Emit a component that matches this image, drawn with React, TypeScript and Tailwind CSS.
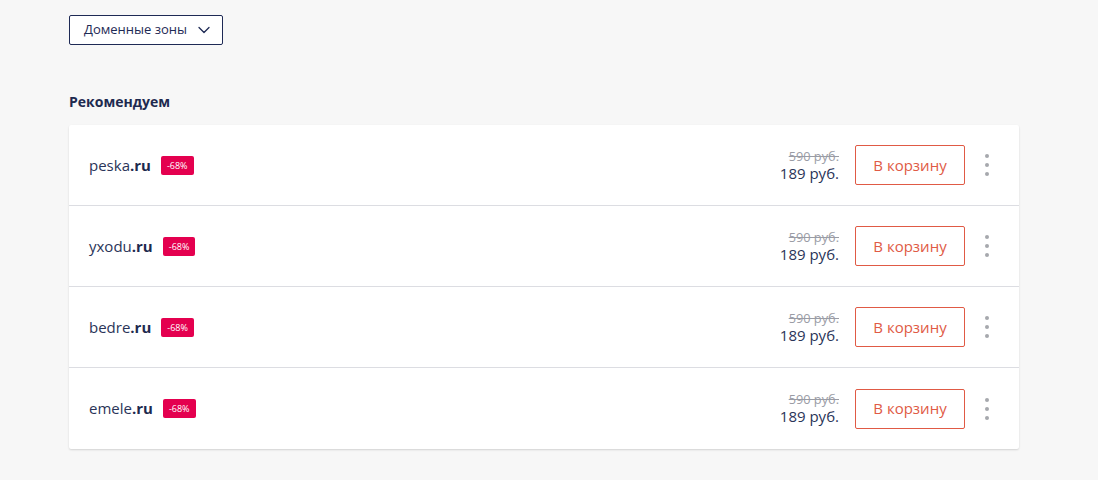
import React from "react";

const domains = [
  { name: "peska", zone: ".ru" },
  { name: "yxodu", zone: ".ru" },
  { name: "bedre", zone: ".ru" },
  { name: "emele", zone: ".ru" },
];

const Chevron = () => (
  <svg width="14" height="14" viewBox="0 0 14 14" fill="none">
    <path d="M2 4.5l5 5 5-5" stroke="#1e2a55" strokeWidth="1.3" strokeLinecap="round" strokeLinejoin="round" />
  </svg>
);

const DomainRow = ({ name, zone }: { name: string; zone: string }) => (
  <div className="flex h-[81px] items-center border-b border-[#dcdde2] pl-5 pr-7 last:border-b-0">
    <div className="flex flex-1 items-center gap-2.5">
      <span className="text-[15px] text-[#2a3458]">
        {name}
        <span className="font-bold text-[#1e2a4f]">{zone}</span>
      </span>
      <span className="rounded-[2px] bg-[#e4004f] px-1.5 py-[4px] text-[9px] leading-[11px] text-white">-68%</span>
    </div>
    <div className="flex flex-col items-end leading-none">
      <span className="text-[12.75px] leading-[16px] text-[#9a9ca5] line-through">590 руб.</span>
      <span className="text-[15px] leading-[19px] text-[#2a3458]">189 руб.</span>
    </div>
    <button className="ml-4 h-10 w-[110px] rounded-[2px] border border-[#e05a45] bg-white text-[15px] text-[#e05a45]">
      В корзину
    </button>
    <div className="ml-[18px] flex w-[8px] flex-col items-center gap-[5px]">
      <span className="h-[4px] w-[4px] rounded-full bg-[#a6a8ad]" />
      <span className="h-[4px] w-[4px] rounded-full bg-[#a6a8ad]" />
      <span className="h-[4px] w-[4px] rounded-full bg-[#a6a8ad]" />
    </div>
  </div>
);

export default function App() {
  return (
    <div className="min-h-[480px] w-full bg-[#f7f7f7] px-[69px] pt-[15px]" style={{ fontFamily: '"Open Sans", sans-serif' }}>
      <button className="flex h-[30px] items-center gap-2.5 rounded-[2px] border border-[#1e2a55] bg-white pl-[14px] pr-[11px] text-[13px] text-[#1e2a55]">
        Доменные зоны
        <Chevron />
      </button>
      <h2 className="mt-[47px] text-[14px] font-bold leading-5 text-[#1e2a4f]">Рекомендуем</h2>
      <div className="mt-[13px] w-[950px] rounded-[2px] bg-white shadow-[0_1px_2px_rgba(0,0,0,0.15)]">
        {domains.map((d) => (
          <DomainRow key={d.name} {...d} />
        ))}
      </div>
    </div>
  );
}
